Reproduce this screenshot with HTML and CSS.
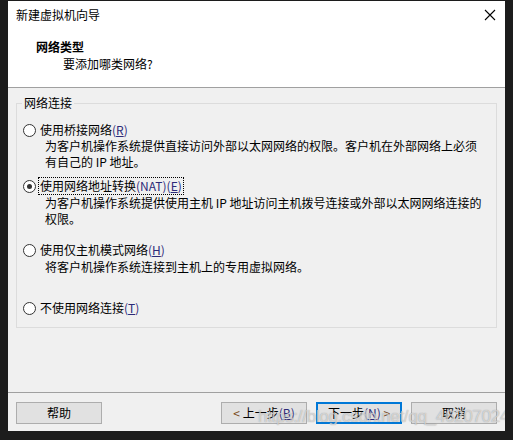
FILE: index.html
```html
<!DOCTYPE html>
<html lang="zh-CN">
<head>
<meta charset="utf-8">
<title>新建虚拟机向导</title>
<link rel="stylesheet" href="styles.css">
</head>
<body>
<div class="window">
  <div class="titlebar">
    <span class="title">新建虚拟机向导</span>
    <svg class="close" width="12" height="12" viewBox="0 0 12 12"><path d="M1 1L11 11M11 1L1 11" stroke="#000" stroke-width="1.1"/></svg>
  </div>
  <div class="header">
    <div class="h-title">网络类型</div>
    <div class="h-sub">要添加哪类网络?</div>
  </div>
  <div class="body">
    <div class="group">
      <div class="legend">网络连接</div>
      <div class="opt opt1">
        <div class="row"><span class="radio"></span><span class="label">使用桥接网络<span class="mn">(<u>R</u>)</span></span></div>
        <div class="desc">为客户机操作系统提供直接访问外部以太网网络的权限。客户机在外部网络上必须<br>有自己的 IP 地址。</div>
      </div>
      <div class="opt opt2">
        <div class="row"><span class="radio checked"></span><span class="label focus">使用网络地址转换<span class="mn">(NAT)(<u>E</u>)</span></span></div>
        <div class="desc">为客户机操作系统提供使用主机 IP 地址访问主机拨号连接或外部以太网网络连接的<br>权限。</div>
      </div>
      <div class="opt opt3">
        <div class="row"><span class="radio"></span><span class="label">使用仅主机模式网络<span class="mn">(<u>H</u>)</span></span></div>
        <div class="desc">将客户机操作系统连接到主机上的专用虚拟网络。</div>
      </div>
      <div class="opt opt4">
        <div class="row"><span class="radio"></span><span class="label">不使用网络连接<span class="mn">(<u>T</u>)</span></span></div>
      </div>
    </div>
  </div>
  <div class="footer">
    <button class="btn">帮助</button>
    <div class="spacer"></div>
    <button class="btn"><span class="lt">&lt;</span> 上一步<span class="mn">(<u>B</u>)</span></button>
    <button class="btn default">下一步<span class="mn">(<u>N</u>)</span> <span class="lt">&gt;</span></button>
    <button class="btn">取消</button>
  </div>
  <div class="watermark">https://blog.csdn.net/qq_46207024</div>
</div>
</body>
</html>
```
FILE: styles.css
```css
html, body {
  margin: 0;
  padding: 0;
  background: #1c1c1c;
  width: 513px;
  height: 440px;
  overflow: hidden;
}
body {
  font-family: "Noto Sans CJK SC", "Microsoft YaHei", sans-serif;
  font-size: 12px;
  color: #000;
}
.window {
  position: relative;
  margin: 1px 0 0 8px;
  width: 497px;
  height: 430px;
  background: #f0f0f0;
  display: flex;
  flex-direction: column;
  overflow: hidden;
}
.titlebar {
  height: 30px;
  background: #fff;
  display: flex;
  align-items: center;
  justify-content: space-between;
  padding: 0 9px 0 8px;
}
.title {
  line-height: 16px;
  margin-top: -2px;
}
.close {
  margin-top: -2px;
}
.header {
  height: 56px;
  background: #fff;
  border-bottom: 1px solid #a0a0a0;
  padding-left: 28px;
}
.h-title {
  font-weight: bold;
  line-height: 16px;
  padding-top: 8px;
}
.h-sub {
  line-height: 16px;
  padding-left: 27px;
  padding-top: 1px;
}
.body {
  height: 304px;
  padding: 15px 8px 0 8px;
  box-sizing: border-box;
}
.group {
  position: relative;
  width: 481px;
  height: 225px;
  box-sizing: border-box;
  border: 1px solid #dcdcdc;
  padding: 18px 0 0 6px;
}
.legend {
  position: absolute;
  top: -9px;
  left: 5px;
  padding: 0 2px;
  line-height: 16px;
  background: #f0f0f0;
}
.opt {
  display: flex;
  flex-direction: column;
}
.opt2 { margin-top: 7px; }
.opt3 { margin-top: 15px; }
.opt4 { margin-top: 25px; }
.row {
  display: flex;
  align-items: center;
  height: 16px;
}
.opt2 .row { height: 18px; }
.radio {
  width: 11px;
  height: 11px;
  border: 1px solid #333;
  border-radius: 50%;
  background: #fff;
  box-sizing: content-box;
  margin-right: 3px;
  position: relative;
  flex: none;
}
.radio.checked::after {
  content: "";
  position: absolute;
  left: 3px;
  top: 3px;
  width: 5px;
  height: 5px;
  border-radius: 50%;
  background: #333;
}
.label {
  line-height: 16px;
  padding: 0 1px;
}
.focus {
  outline: 1px dotted #000;
  outline-offset: 0;
}
.mn {
  color: #2c2a78;
}
.mn u {
  text-decoration-thickness: 1px;
  text-underline-offset: 1px;
}
.desc {
  line-height: 16px;
  padding-left: 22px;
}
.opt3 .desc { margin-top: 1px; }
.footer {
  border-top: 1px solid #a0a0a0;
  flex: 1;
  display: flex;
  align-items: flex-start;
  padding: 9px 8px 0 8px;
  gap: 9px;
}
.spacer { flex: 1; }
.btn {
  width: 86px;
  height: 22px;
  box-sizing: border-box;
  background: #e1e1e1;
  border: 1px solid #adadad;
  font-family: "Noto Sans CJK SC", "Microsoft YaHei", sans-serif;
  font-size: 12px;
  color: #000;
  padding: 0;
  line-height: 18px;
  margin: 0;
}
.btn.default {
  border: 2px solid #0078d7;
  line-height: 16px;
}
.lt { color: #7a4a1a; }
.watermark {
  position: absolute;
  left: 250px;
  top: 406px;
  font-family: "Liberation Sans", Arial, sans-serif;
  font-size: 17px;
  letter-spacing: -0.3px;
  line-height: 20px;
  color: rgba(255, 255, 255, 0.55);
  text-shadow: 0 0 1px rgba(110, 110, 110, 0.7);
  white-space: nowrap;
  pointer-events: none;
}
```
